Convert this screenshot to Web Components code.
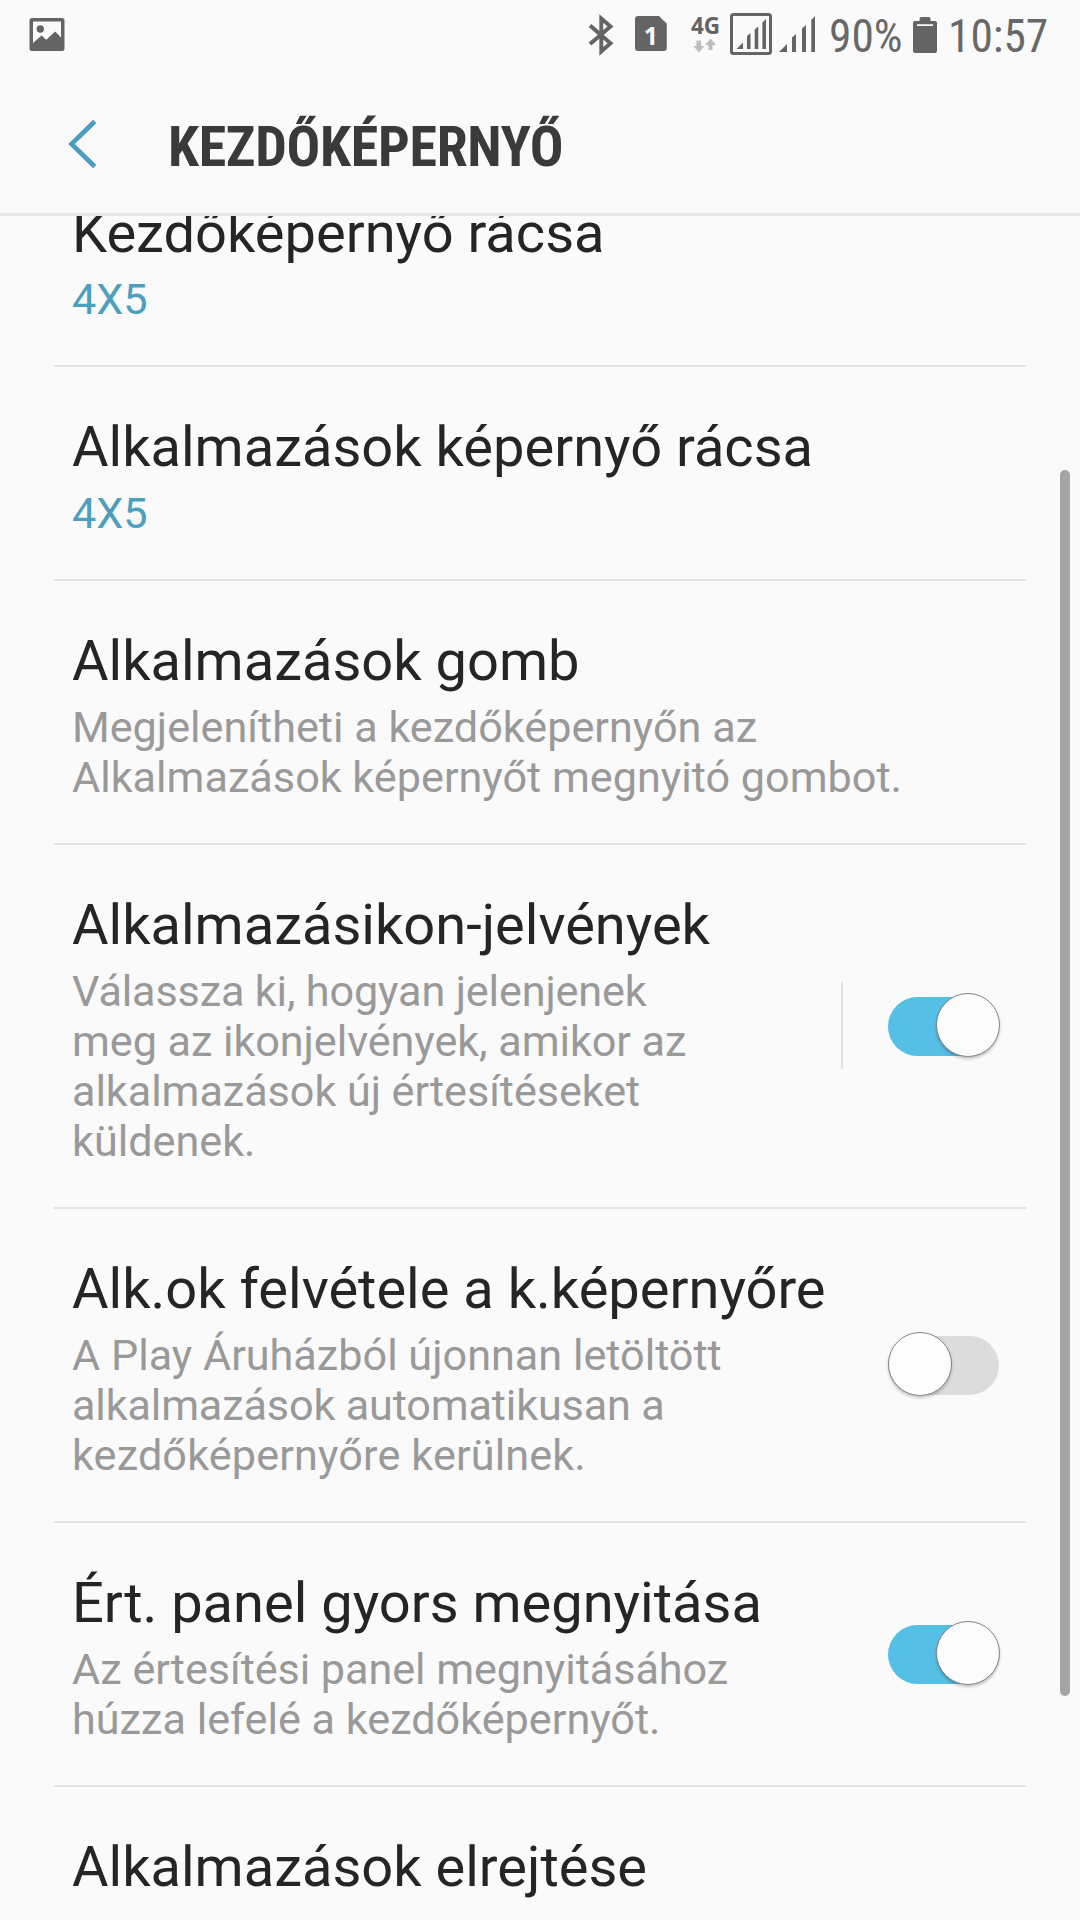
<!DOCTYPE html>
<html lang="hu">
<head>
<meta charset="utf-8">
<title>Kezdőképernyő</title>
<style>
  html, body { margin: 0; padding: 0; }
  body { width: 1080px; height: 1920px; overflow: hidden; background: #fafafa; font-family: Roboto, "Noto Sans", sans-serif; }
  .tight { letter-spacing: -0.15px; }
  .snug { letter-spacing: -0.06px; }
  .loose { letter-spacing: 0.14px; }
</style>
</head>
<body>
<settings-screen>
  <status-bar slot="status"></status-bar>
  <app-header slot="header">KEZDŐKÉPERNYŐ</app-header>
  <setting-row value>Kezdőképernyő rácsa<span slot="summary">4X5</span></setting-row>
  <setting-row value>Alkalmazások képernyő rácsa<span slot="summary">4X5</span></setting-row>
  <setting-row>Alkalmazások gomb<span slot="summary">Megjelenítheti a kezdőképernyőn az<br>Alkalmazások képernyőt megnyitó gombot.</span></setting-row>
  <setting-row split>Alkalmazásikon-jelvények<span slot="summary"><span class="tight">Válassza ki, hogyan jelenjenek</span><br><span class="snug">meg az ikonjelvények, amikor az<br>alkalmazások új értesítéseket</span><br>küldenek.</span><toggle-switch slot="control" on></toggle-switch></setting-row>
  <setting-row>Alk.ok felvétele a k.képernyőre<span slot="summary">A Play Áruházból újonnan letöltött<br><span class="tight">alkalmazások automatikusan a</span><br><span class="loose">kezdőképernyőre kerülnek.</span></span><toggle-switch slot="control"></toggle-switch></setting-row>
  <setting-row>Ért. panel gyors megnyitása<span slot="summary"><span class="snug">Az értesítési panel megnyitásához</span><br>húzza lefelé a kezdőképernyőt.</span><toggle-switch slot="control" on></toggle-switch></setting-row>
  <setting-row>Alkalmazások elrejtése</setting-row>
</settings-screen>

<script>
const define = (name, html) => customElements.define(name, class extends HTMLElement {
  constructor() {
    super();
    this.attachShadow({ mode: 'open' }).innerHTML = html;
  }
});

define('settings-screen', `
<style>
  :host { display: flex; flex-direction: column; position: relative; width: 1080px; height: 1920px; overflow: hidden; background: #fafafa; }
  .view { flex: 1; min-height: 0; overflow: hidden; }
  .list { display: flex; flex-direction: column; margin-top: -63px; }
  .thumb { position: absolute; left: 1060px; top: 470px; width: 10px; height: 1226px; border-radius: 5px; background: #a5a5a5; }
</style>
<slot name="status"></slot>
<slot name="header"></slot>
<div class="view"><div class="list"><slot></slot></div></div>
<div class="thumb"></div>`);

define('status-bar', `
<style>
  :host { display: flex; align-items: flex-start; height: 72px; flex: none; color: #686868; fill: #646464; }
  svg { display: block; flex: none; height: 72px; }
  .space { flex: 1; }
  .t { font-size: 45.4px; line-height: 54px; font-stretch: condensed; white-space: nowrap; margin-top: 10px; }
  .net { display: flex; flex-direction: column; width: 32px; margin-left: 22px; }
  .net b { font: bold 22.5px/26px "Open Sans", sans-serif; margin: 13px 0 0 2px; color: #646464; white-space: nowrap; }
  .net svg { height: 14px; }
  .sim { display: grid; }
  .sim > * { grid-area: 1 / 1; }
  .sim b { font: bold 25px/30px "Open Sans", sans-serif; color: #fafafa; text-align: center; margin-top: 20px; z-index: 1; }
</style>
<svg width="72" viewBox="0 0 72 72"><path fill-rule="evenodd" d="M32 18h30q2.500 0 2.500 2.500v28q0 2.500-2.500 2.500h-30q-2.500 0-2.500-2.500v-28q0-2.500 2.500-2.500zM33 21.500v21.500l8.500-7.500 4.700 4.300 9-8.200 5.800 5.900v-16z"/><circle cx="40.300" cy="29" r="3.700"/></svg>
<div class="space"></div>
<svg width="28" viewBox="587 0 28 72"><path d="M590 25.500L610.500 43.300L601.300 51.500V18.500L610.500 26.500L590 44" fill="none" stroke="#646464" stroke-width="3.900"/></svg>
<div class="sim" style="margin-left:20px"><svg width="32" viewBox="635 0 32 72"><path d="M638 16h21l7.800 7.800v24.200q0 3-3 3h-25.800q-3 0-3-3v-29q0-3 3-3z"/></svg><b>1</b></div>
<div class="net"><b>4G</b><svg width="32" viewBox="689 39 32 14" fill="#bdbdbd"><path d="M696.500 40.500h4.500v5.500h3.500l-5.700 6.500-5.300-6.500h3z"/><path d="M708.500 50v-5h-3.500l5.500-6.300 5.500 6.300h-3.500v5z"/></svg></div>
<svg style="margin-left:9px" width="86" viewBox="730 0 86 72"><rect x="731.500" y="14.500" width="39" height="39" rx="2" fill="none" stroke="#646464" stroke-width="3"/><path d="M736.500 49l6.500-6.500v6.500zM747 49v-13l3.500-3v16zM754.700 49v-19.500l3.600-3v22.500zM762.400 49v-26.500l3.600-3.500v30z"/><path d="M779 52l8-8v8zM792 52v-14.500l4-3.500v18zM802 52v-23.500l4-3.500v27zM811.300 52v-32l3.700-4v36z"/></svg>
<div class="t" style="margin-left:13px;width:75px">90%</div>
<svg style="margin-left:9px" width="24" viewBox="913 0 24 72"><path fill-rule="evenodd" d="M921.500 17h7q2 0 2 2v2h4.500q2 0 2 2v28q0 2-2 2h-20q-2 0-2-2v-28q0-2 2-2h4.500v-2q0-2 2-2zM917 24.300v1.700h16v-1.700z"/></svg>
<div class="t" style="margin-left:11px;width:132px">10:57</div>`);

define('app-header', `
<style>
  :host { display: flex; align-items: flex-start; box-sizing: border-box; height: 144px; flex: none; border-bottom: 3px solid #e5e5e5; }
  svg { display: block; flex: none; width: 30px; height: 50px; margin: 47px 70px 0 68px; }
  h1 { margin: 42px 0 0; font-size: 56px; line-height: 66px; font-weight: 700; font-stretch: condensed; letter-spacing: -0.3px; color: #3a3a3a; white-space: nowrap; }
</style>
<svg viewBox="68 119 30 50"><path d="M94.700 121.500L71.500 144L94.700 166.500" fill="none" stroke="#4a9dbd" stroke-width="4.600"/></svg>
<h1><slot></slot></h1>`);

define('setting-row', `
<style>
  :host { display: flex; flex: none; align-items: center; margin: 0 54px; border-bottom: 2px solid #e4e4e4; --sum: #999; }
  :host([value]) { --sum: #4c9fbd; }
  .text { flex: 1; min-width: 0; padding: 47px 0 40px 18px; display: flex; flex-direction: column; gap: 9px; white-space: nowrap; }
  .title { font-size: 56px; line-height: 66px; color: #252525; }
  .sum { font-size: 43.2px; line-height: 50px; color: var(--sum); }
  .control { display: flex; align-items: center; margin-right: 27px; }
  .bar { display: none; width: 2px; height: 87px; margin: 0 45px 1px 0; background: #e2e2e2; }
  :host([split]) .bar { display: block; }
</style>
<div class="text"><div class="title"><slot></slot></div><div class="sum"><slot name="summary"></slot></div></div>
<div class="control"><div class="bar"></div><slot name="control"></slot></div>`);

define('toggle-switch', `
<style>
  :host { display: flex; align-items: center; box-sizing: border-box; width: 111px; height: 59px; border-radius: 30px; background: #dcdcdc; }
  i { display: block; flex: none; box-sizing: border-box; width: 64px; height: 64px; margin-top: -3px; border: 1px solid #858585; border-radius: 50%; background: #fdfdfd; box-shadow: 0 2px 3px rgba(0,0,0,.22); }
  :host([on]) { background: #55bfe5; }
  :host([on]) i { margin-left: 48px; background: #fcfcfc; }
</style><i></i>`);
</script>
</body>
</html>
